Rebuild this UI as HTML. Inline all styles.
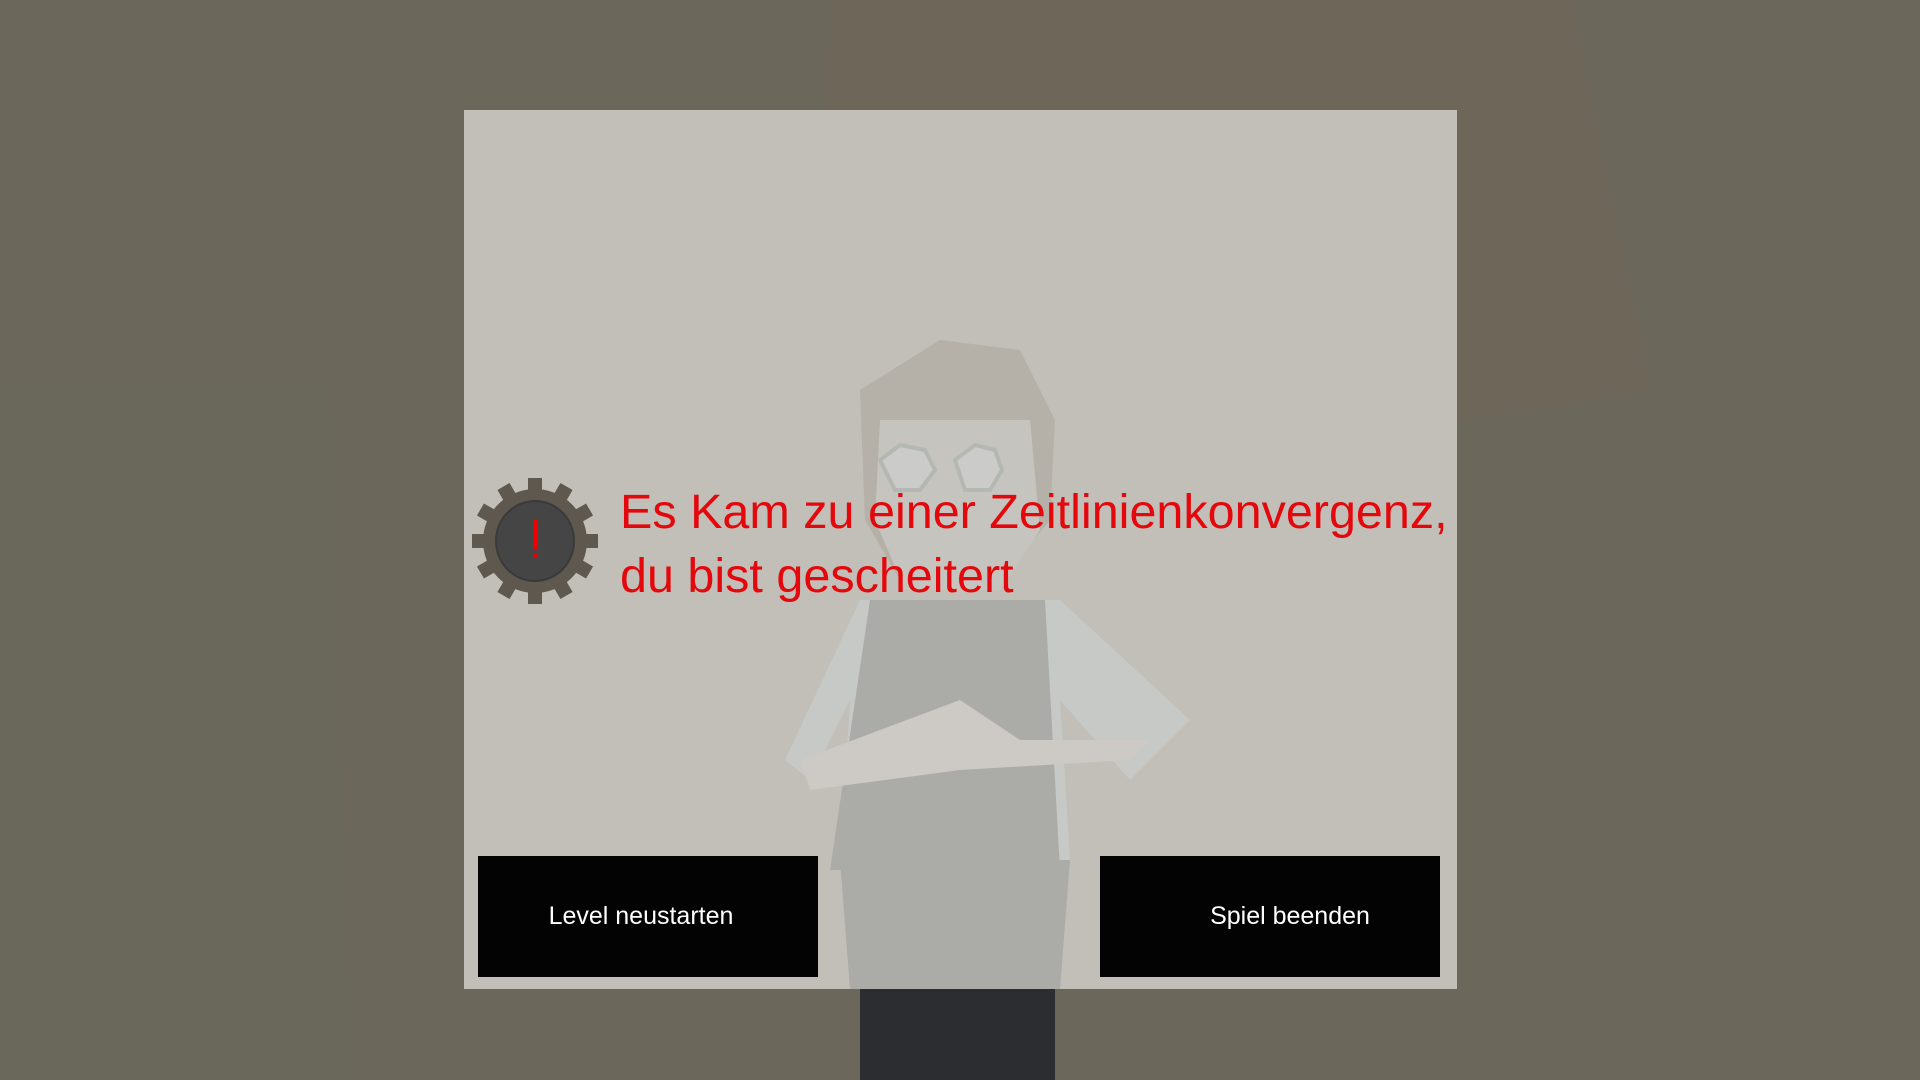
<!DOCTYPE html>
<html><head><meta charset="utf-8"><style>
html,body{margin:0;padding:0;width:1920px;height:1080px;overflow:hidden;background:#6b675a;font-family:"Liberation Sans",sans-serif}
.bg{position:absolute;inset:0}
.panel{position:absolute;left:464px;top:110px;width:993px;height:879px;background:rgba(196,194,187,0.97)}
.fig{position:absolute;left:0;top:0}
.h{position:absolute;left:620px;top:480px;color:#e4080c;font-size:48.5px;line-height:64px;letter-spacing:0px;white-space:nowrap}
.btn{position:absolute;top:856px;width:340px;height:121px;background:#030303;color:#fff;font-size:25px;line-height:121px;text-align:center}
</style></head><body>
<svg class="bg" width="1920" height="1080">
<polygon points="830,0 1570,0 1650,390 1400,430 820,420" fill="#6e6658"/>
<polygon points="0,380 330,380 350,1080 0,1080" fill="#6a675b"/>
<rect x="860" y="989" width="195" height="91" fill="#2c2d30"/>
</svg>
<div class="panel"></div>
<svg class="fig" width="1920" height="1080" opacity="0.3">
<polygon points="860,390 940,340 1020,350 1055,420 1050,520 1000,580 900,580 865,520" fill="#9b8f85"/>
<polygon points="880,420 1030,420 1040,530 1000,590 905,590 875,520" fill="#cfd0d2"/>
<polygon points="880,460 900,445 925,450 935,470 920,490 895,490" fill="#e4ecf2" stroke="#9aa" stroke-width="4"/>
<polygon points="955,460 975,445 995,450 1002,470 990,490 965,490" fill="#e4ecf2" stroke="#9aa" stroke-width="4"/>
<polygon points="860,600 1060,600 1190,720 1130,780 1060,700 1070,860 840,860 850,700 810,780 785,760" fill="#d6e0ec"/>
<polygon points="870,600 1045,600 1060,870 830,870" fill="#7c7e86"/>
<polygon points="800,760 960,700 1020,740 1150,740 1130,760 960,770 810,790" fill="#e9e3e3"/>
<polygon points="840,860 1070,860 1060,989 850,989" fill="#7c7e86"/>
</svg>
<svg class="fig" width="1920" height="1080">
<g transform="translate(535,541)">
<g fill="#5f584f">
<circle r="52"/>
<rect x="-7" y="-63" width="14" height="20" transform="rotate(0)"/>
<rect x="-7" y="-63" width="14" height="20" transform="rotate(30)"/>
<rect x="-7" y="-63" width="14" height="20" transform="rotate(60)"/>
<rect x="-7" y="-63" width="14" height="20" transform="rotate(90)"/>
<rect x="-7" y="-63" width="14" height="20" transform="rotate(120)"/>
<rect x="-7" y="-63" width="14" height="20" transform="rotate(150)"/>
<rect x="-7" y="-63" width="14" height="20" transform="rotate(180)"/>
<rect x="-7" y="-63" width="14" height="20" transform="rotate(210)"/>
<rect x="-7" y="-63" width="14" height="20" transform="rotate(240)"/>
<rect x="-7" y="-63" width="14" height="20" transform="rotate(270)"/>
<rect x="-7" y="-63" width="14" height="20" transform="rotate(300)"/>
<rect x="-7" y="-63" width="14" height="20" transform="rotate(330)"/>
</g>
<ellipse rx="39" ry="40" fill="#454545" stroke="#3a3a3a" stroke-width="2"/>
<rect x="-2" y="-22" width="4" height="30" fill="#e00"/>
<rect x="-2" y="12" width="4" height="5" fill="#e00"/>
</g>
</svg>
<div class="h">Es Kam zu einer Zeitlinienkonvergenz,<br>du bist gescheitert</div>
<div class="btn" style="left:478px;width:326px;padding-right:14px">Level neustarten</div>
<div class="btn" style="left:1100px;width:300px;padding-left:40px">Spiel beenden</div>
</body></html>
